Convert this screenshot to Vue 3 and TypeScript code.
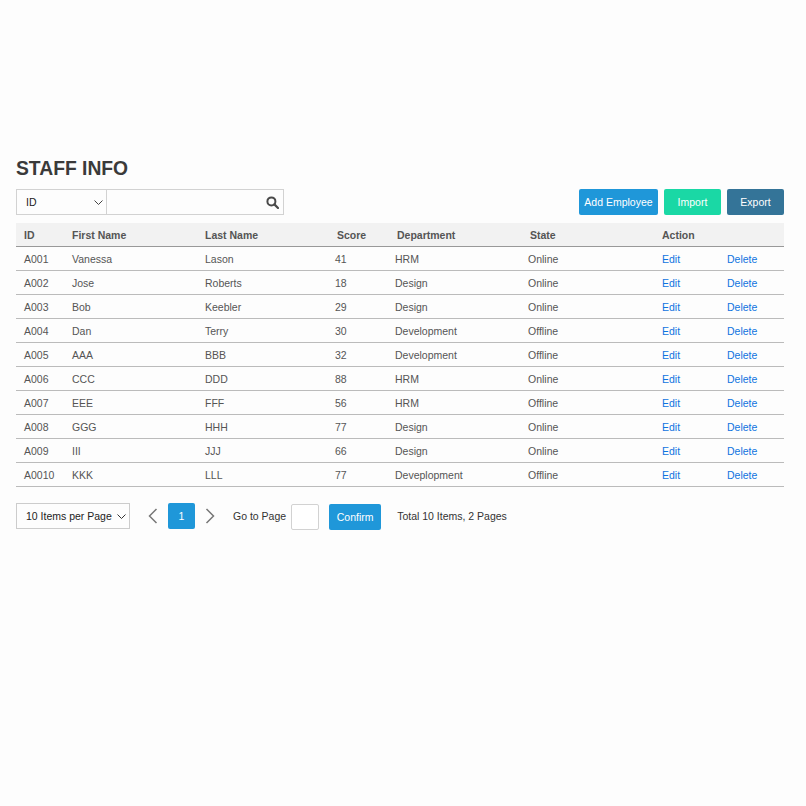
<script setup lang="ts">
interface Row { id: string; first: string; last: string; score: number; dept: string; state: string }
const rows: Row[] = [
  { id: 'A001', first: 'Vanessa', last: 'Lason', score: 41, dept: 'HRM', state: 'Online' },
  { id: 'A002', first: 'Jose', last: 'Roberts', score: 18, dept: 'Design', state: 'Online' },
  { id: 'A003', first: 'Bob', last: 'Keebler', score: 29, dept: 'Design', state: 'Online' },
  { id: 'A004', first: 'Dan', last: 'Terry', score: 30, dept: 'Development', state: 'Offline' },
  { id: 'A005', first: 'AAA', last: 'BBB', score: 32, dept: 'Development', state: 'Offline' },
  { id: 'A006', first: 'CCC', last: 'DDD', score: 88, dept: 'HRM', state: 'Online' },
  { id: 'A007', first: 'EEE', last: 'FFF', score: 56, dept: 'HRM', state: 'Offline' },
  { id: 'A008', first: 'GGG', last: 'HHH', score: 77, dept: 'Design', state: 'Online' },
  { id: 'A009', first: 'III', last: 'JJJ', score: 66, dept: 'Design', state: 'Online' },
  { id: 'A0010', first: 'KKK', last: 'LLL', score: 77, dept: 'Deveplopment', state: 'Offline' },
]
</script>

<template>
  <main class="page">
    <h1 class="title">STAFF INFO</h1>
    <div class="toolbar">
      <div class="search">
        <div class="field-select">
          <span>ID</span>
          <svg width="9" height="5" viewBox="0 0 9 5"><path d="M0.5 0.5 L4.5 4.5 L8.5 0.5" fill="none" stroke="#444" stroke-width="1" /></svg>
        </div>
        <div class="field-input">
          <svg width="13" height="13" viewBox="0 0 13 13"><circle cx="5.4" cy="5.4" r="4" fill="none" stroke="#4a4a4a" stroke-width="2" /><path d="M8.4 8.4 L12 12" stroke="#4a4a4a" stroke-width="2.2" stroke-linecap="round" /></svg>
        </div>
      </div>
      <div class="actions">
        <button class="btn blue add">Add Employee</button>
        <button class="btn green imp">Import</button>
        <button class="btn teal exp">Export</button>
      </div>
    </div>
    <table class="table">
      <colgroup>
        <col class="c-id" /><col class="c-first" /><col class="c-last" /><col class="c-score" />
        <col class="c-dept" /><col class="c-state" /><col class="c-edit" /><col />
      </colgroup>
      <thead>
        <tr>
          <th>ID</th><th>First Name</th><th>Last Name</th>
          <th class="shift">Score</th><th class="shift">Department</th><th class="shift">State</th>
          <th colspan="2">Action</th>
        </tr>
      </thead>
      <tbody>
        <tr v-for="r in rows" :key="r.id">
          <td>{{ r.id }}</td><td>{{ r.first }}</td><td>{{ r.last }}</td><td>{{ r.score }}</td>
          <td>{{ r.dept }}</td><td>{{ r.state }}</td>
          <td class="link">Edit</td><td class="link">Delete</td>
        </tr>
      </tbody>
    </table>
    <div class="pager">
      <div class="size-select">
        <span>10 Items per Page</span>
        <svg width="9" height="5" viewBox="0 0 9 5"><path d="M0.5 0.5 L4.5 4.5 L8.5 0.5" fill="none" stroke="#333" stroke-width="1" /></svg>
      </div>
      <svg class="arrow prev" width="10" height="16" viewBox="0 0 10 16"><path d="M8.5 1 L1.5 8 L8.5 15" fill="none" stroke="#777" stroke-width="1.5" /></svg>
      <div class="page-num">1</div>
      <svg class="arrow next" width="10" height="16" viewBox="0 0 10 16"><path d="M1.5 1 L8.5 8 L1.5 15" fill="none" stroke="#777" stroke-width="1.5" /></svg>
      <span class="goto">Go to Page</span>
      <div class="page-input"></div>
      <button class="btn blue confirm">Confirm</button>
      <span class="total">Total 10 Items, 2 Pages</span>
    </div>
  </main>
</template>

<style>
html, body { background: #fdfdfd; }
</style>

<style scoped>
.page {
  box-sizing: border-box;
  width: 806px;
  height: 806px;
  padding: 157px 22px 0 16px;
  font-family: "Liberation Sans", Arial, sans-serif;
  font-size: 10.5px;
  color: #444;
}
.title {
  margin: 0;
  font-size: 19.3px;
  line-height: 23px;
  font-weight: 700;
  color: #3a3a3a;
}
.toolbar {
  margin-top: 9px;
  display: flex;
  justify-content: space-between;
  align-items: flex-start;
}
.search { display: flex; height: 26px; }
.field-select {
  box-sizing: border-box;
  width: 91px;
  border: 1px solid #d2d2d2;
  padding: 0 3px 0 9px;
  display: flex;
  align-items: center;
  justify-content: space-between;
  color: #222;
}
.field-input {
  box-sizing: border-box;
  width: 177px;
  border: 1px solid #d2d2d2;
  border-left: none;
  display: flex;
  align-items: center;
  justify-content: flex-end;
  padding-right: 4px;
}
.actions { display: flex; gap: 6px; }
.btn {
  border: none;
  border-radius: 2px;
  height: 26px;
  padding: 0;
  color: #fff;
  font-family: inherit;
  font-size: 10.5px;
}
.blue { background: #1f97d9; }
.green { background: #1ad8a5; }
.teal { background: #347498; }
.add { width: 79px; }
.imp { width: 57px; }
.exp { width: 57px; }
.table {
  margin-top: 8px;
  width: 768px;
  border-collapse: separate;
  border-spacing: 0;
  table-layout: fixed;
}
.c-id { width: 48px; }
.c-first { width: 133px; }
.c-last { width: 130px; }
.c-score { width: 60px; }
.c-dept { width: 133px; }
.c-state { width: 134px; }
.c-edit { width: 65px; }
th {
  box-sizing: border-box;
  height: 24px;
  background: #f2f2f2;
  border-bottom: 1px solid #999;
  padding: 0 0 0 8px;
  text-align: left;
  font-weight: 700;
  color: #555;
  font-size: 10.5px;
}
th.shift { padding-left: 10px; }
td {
  box-sizing: border-box;
  height: 24px;
  border-bottom: 1px solid #bbb;
  padding: 0 0 0 8px;
  color: #555;
  font-size: 10.5px;
}
td.link { color: #0f73e0; }
.pager {
  margin-top: 16px;
  display: flex;
  align-items: center;
  height: 26px;
}
.size-select {
  box-sizing: border-box;
  width: 114px;
  height: 26px;
  border: 1px solid #ccc;
  padding: 0 3px 0 9px;
  display: flex;
  align-items: center;
  justify-content: space-between;
  color: #222;
}
.prev { margin-left: 18px; }
.page-num {
  margin-left: 10px;
  width: 27px;
  height: 26px;
  background: #1f97d9;
  border-radius: 2px;
  color: #fff;
  display: flex;
  align-items: center;
  justify-content: center;
}
.next { margin-left: 10px; }
.goto { margin-left: 18px; color: #333; }
.page-input {
  box-sizing: border-box;
  margin-left: 5px;
  margin-top: 2px;
  width: 28px;
  height: 26px;
  border: 1px solid #d2d2d2;
  border-radius: 2px;
  background: #fff;
}
.confirm { margin-left: 10px; margin-top: 2px; width: 52px; }
.total { margin-left: 16px; color: #333; }
</style>
